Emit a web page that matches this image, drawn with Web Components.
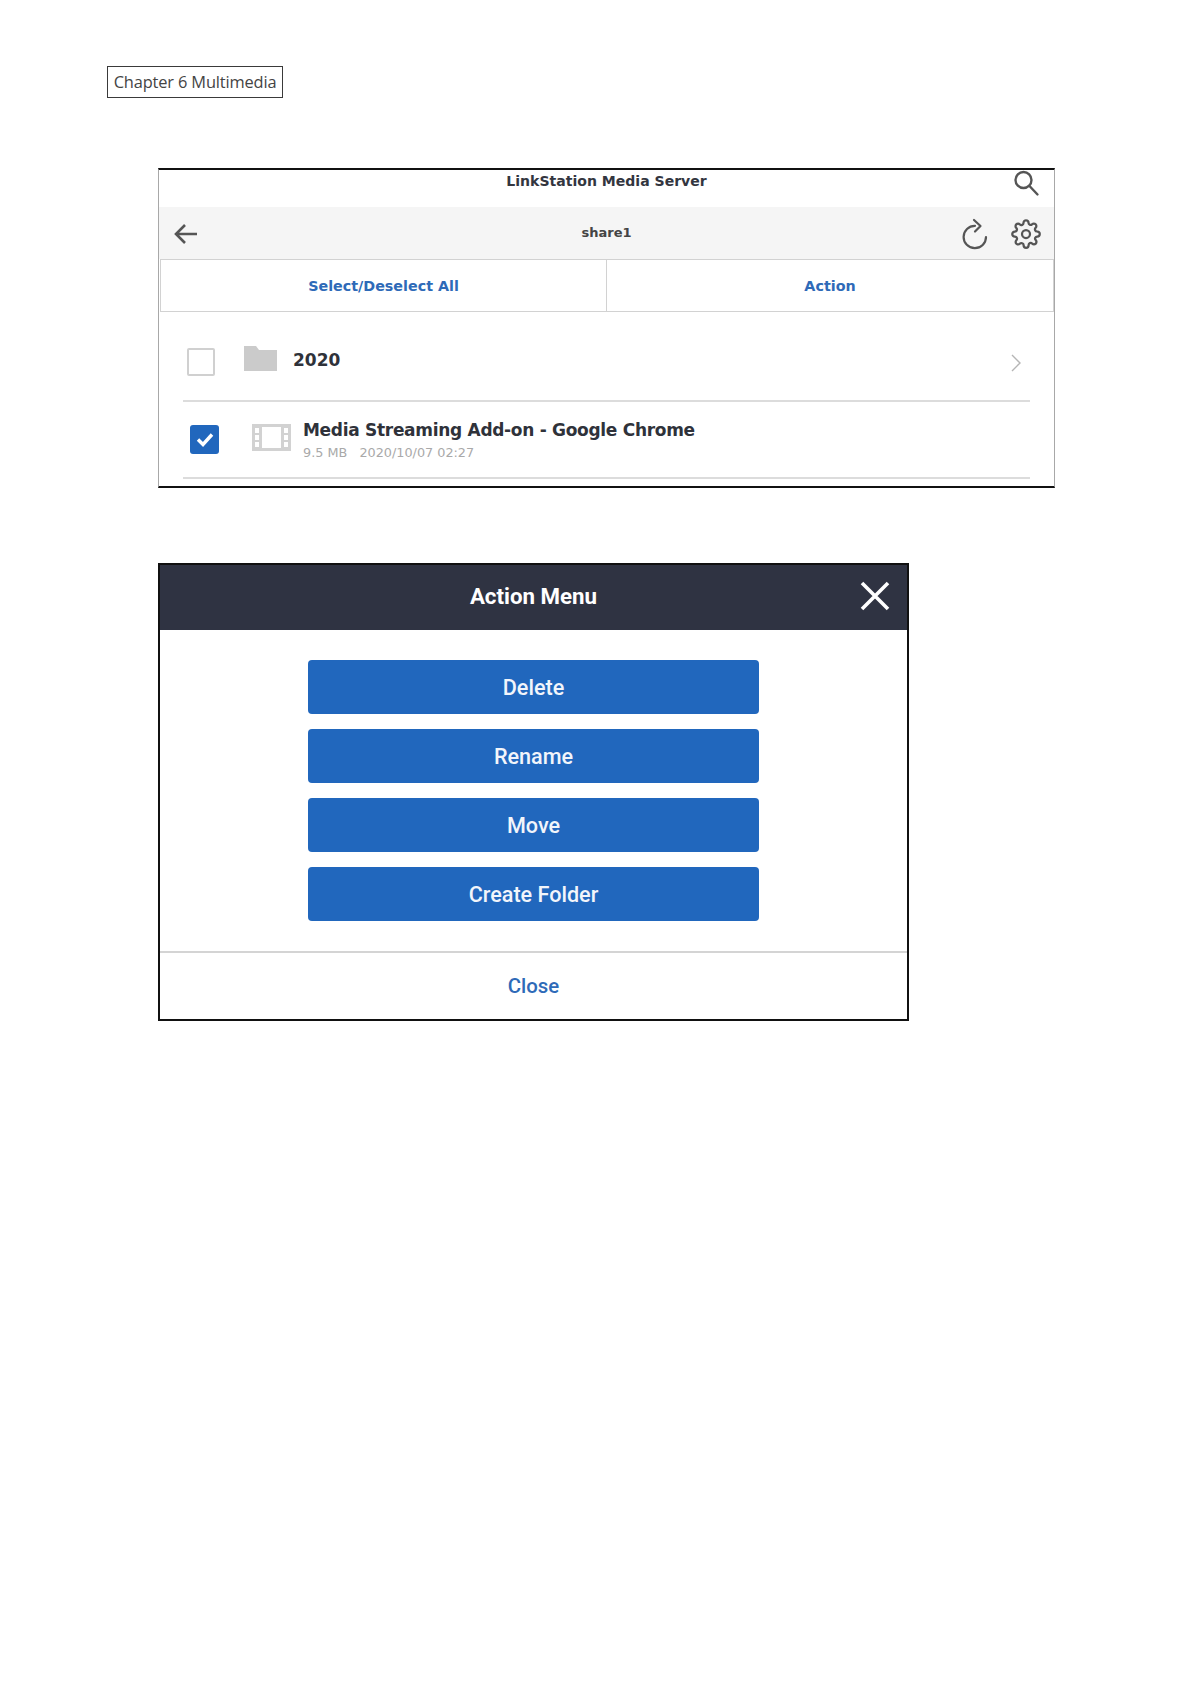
<!DOCTYPE html>
<html>
<head>
<meta charset="utf-8">
<title>Chapter 6 Multimedia</title>
<style>
  html, body { margin: 0; background: #fff; }
  doc-page { font-family: "DejaVu Sans", sans-serif; }
</style>
</head>
<body>
<doc-page>
  <chapter-tag>Chapter 6 Multimedia</chapter-tag>
  <media-panel>
    <file-row kind="folder" name="2020"></file-row>
    <file-row kind="video" checked name="Media Streaming Add-on - Google Chrome" meta="9.5 MB&#160;&#160;&#160;2020/10/07 02:27"></file-row>
  </media-panel>
  <action-menu>
    <menu-button>Delete</menu-button>
    <menu-button>Rename</menu-button>
    <menu-button>Move</menu-button>
    <menu-button>Create Folder</menu-button>
  </action-menu>
</doc-page>

<script>
class docPage extends HTMLElement {
    constructor(){
        super();
        this.attachShadow({ mode : "open"});
        this.shadowRoot.innerHTML = `
        <style>
            :host { display: block; width: 1191px; height: 1684px; box-sizing: border-box; padding: 66px 0 0 107px; background: #fff; }
            ::slotted(media-panel) { margin: 70px 0 0 51px; }
            ::slotted(action-menu) { margin: 75px 0 0 51px; }
        </style>
        <slot></slot>`;
    }
}

class chapterTag extends HTMLElement {
    constructor(){
        super();
        this.attachShadow({ mode : "open"});
        this.shadowRoot.innerHTML = `
        <style>
            :host {
                display: block; width: 176px; height: 32px; box-sizing: border-box;
                border: 1px solid #3a3a3a; text-align: center;
                font: 400 16.4px/29px "Open Sans", sans-serif; letter-spacing: -0.15px; color: #444; white-space: nowrap;
            }
        </style>
        <slot></slot>`;
    }
}

class mediaPanel extends HTMLElement {
    constructor(){
        super();
        this.attachShadow({ mode : "open"});
        this.shadowRoot.innerHTML = `
        <style>
            :host {
                display: block; width: 897px; height: 320px; box-sizing: border-box;
                border: 1px solid #a8a8a8; border-top: 2px solid #111; border-bottom: 2px solid #111;
                font-family: "DejaVu Sans", sans-serif; background: #fff;
            }
            .title { height: 37px; display: flex; justify-content: center; position: relative; font-size: 14.05px; font-weight: 700; color: #33363f; line-height: 23px; }
            .search { position: absolute; right: 14px; top: -1px; }
            .nav { height: 52px; background: #f5f5f5; display: flex; align-items: center; padding: 0 13px 0 13px; gap: 21px; }
            .nav .where { flex: 1; text-align: center; font-size: 13px; font-weight: 700; color: #444; padding-left: 54px; padding-bottom: 1px; }
            .tabs { display: grid; grid-template-columns: 445px 1fr; height: 53px; box-sizing: border-box; border: 1px solid #d2d2d2; margin: 0 0 0 1px; }
            .tabs div { display: flex; align-items: center; justify-content: center; font-size: 14.3px; font-weight: 700; color: #2e6ab8; }
            .tabs div + div { border-left: 1px solid #d2d2d2; }
            .list { display: block; }
        </style>
        <div class="title">
            <span>LinkStation Media Server</span>
            <svg class="search" width="28" height="28" viewBox="0 0 28 28" fill="none" stroke="#555" stroke-width="2.4"><circle cx="11.5" cy="11" r="8"/><path d="M17.5 17l8 8.5" stroke-linecap="round"/></svg>
        </div>
        <div class="nav">
            <svg width="26" height="24" viewBox="0 0 26 24" fill="none" stroke="#555" stroke-width="2.6" style="margin-top:2px;margin-left:1px"><path d="M24 12H3M12 3l-9 9 9 9"/></svg>
            <span class="where">share1</span>
            <svg width="30" height="32" viewBox="0 0 30 32" fill="none" stroke="#555" stroke-width="2.2" stroke-linecap="round" style="margin-top:2px"><path d="M26 19A11.2 11.2 0 1 1 15 7.8"/><path d="M14 2l6.5 6-5.5 5.5" stroke-linejoin="round"/></svg>
            <svg width="30" height="30" viewBox="0 0 24 24" fill="none" stroke="#555" stroke-width="1.8" style="margin-top:2px"><circle cx="12" cy="12" r="3.2"/><path d="M19.4 15a1.65 1.65 0 0 0 .33 1.82l.06.06a2 2 0 0 1 0 2.83 2 2 0 0 1-2.83 0l-.06-.06a1.65 1.65 0 0 0-1.82-.33 1.65 1.65 0 0 0-1 1.51V21a2 2 0 0 1-2 2 2 2 0 0 1-2-2v-.09A1.65 1.65 0 0 0 9 19.4a1.65 1.65 0 0 0-1.82.33l-.06.06a2 2 0 0 1-2.83 0 2 2 0 0 1 0-2.83l.06-.06a1.65 1.65 0 0 0 .33-1.82 1.65 1.65 0 0 0-1.51-1H3a2 2 0 0 1-2-2 2 2 0 0 1 2-2h.09A1.65 1.65 0 0 0 4.6 9a1.65 1.65 0 0 0-.33-1.82l-.06-.06a2 2 0 0 1 0-2.83 2 2 0 0 1 2.83 0l.06.06a1.65 1.65 0 0 0 1.82.33H9a1.65 1.65 0 0 0 1-1.51V3a2 2 0 0 1 2-2 2 2 0 0 1 2 2v.09a1.65 1.65 0 0 0 1 1.51 1.65 1.65 0 0 0 1.82-.33l.06-.06a2 2 0 0 1 2.83 0 2 2 0 0 1 0 2.83l-.06.06a1.65 1.65 0 0 0-.33 1.82V9a1.65 1.65 0 0 0 1.51 1H21a2 2 0 0 1 2 2 2 2 0 0 1-2 2h-.09a1.65 1.65 0 0 0-1.51 1z"/></svg>
        </div>
        <div class="tabs"><div>Select/Deselect All</div><div>Action</div></div>
        <div class="list"><slot></slot></div>`;
    }
}

class fileRow extends HTMLElement {
    constructor(){
        super();
        this.attachShadow({ mode : "open"});
    }
    getIcon(){
        if (this.getAttribute("kind") == "folder") {
            return `<svg class="icon" width="33" height="25" viewBox="0 0 33 25"><path fill="#cbcbcb" d="M0 0h12l3 4h18v21H0z"/></svg>`;
        }
        return `<svg class="icon" width="39" height="27" viewBox="0 0 39 27"><path fill="#d2d2d2" fill-rule="evenodd" d="M0 0h39v27H0zM10 3v21h19V3zM3 4v5h4V4zM3 11v5h4v-5zM3 18v5h4v-5zM32 4v5h4V4zM32 11v5h4v-5zM32 18v5h4v-5z"/></svg>`;
    }
    connectedCallback(){
        const video = this.getAttribute("kind") != "folder";
        const meta = this.getAttribute("meta");
        this.shadowRoot.innerHTML = `
        <style>
            :host { display: block; font-family: "DejaVu Sans", sans-serif; }
            .row { margin: 0 24px 0 24px; border-bottom: 2px solid #dcdcdc; display: flex; align-items: center; box-sizing: border-box; height: ${video ? 77 : 90}px; }
            .box { width: 28px; height: 28px; box-sizing: border-box; border: 2px solid #d0d0d0; border-radius: 2px; margin-left: 4px; flex: none; margin-top: 12px; }
            .box.on { background: #2167bd; border: 0; border-radius: 3px; margin-left: 7px; margin-right: 33px; margin-top: 0; display: flex; align-items: center; justify-content: center; width: 29px; height: 29px; }
            .icon { flex: none; margin: 5px 16px 0 29px; }
            .on + .icon { margin: -4px 12px 0 0; }
            .name { font-weight: 700; font-size: 17px; color: #2f323a; letter-spacing: ${video ? -0.3 : 0}px; }
            .meta { font-size: 12.8px; color: #a9a9a9; margin-top: 5px; }
            .text { flex: 1; margin-top: ${video ? 0 : 8}px; }
            .more { margin-right: 9px; margin-top: 13px; }
        </style>
        <div class="row">
            <div class="box ${this.hasAttribute("checked") ? "on" : ""}">${this.hasAttribute("checked") ? '<svg width="18" height="15" viewBox="0 0 18 15" fill="none" stroke="#fff" stroke-width="3.4"><path d="M2 7.5l5 5 9-10"/></svg>' : ""}</div>
            ${this.getIcon()}
            <div class="text">
                <div class="name">${this.getAttribute("name")}</div>
                ${meta ? `<div class="meta">${meta}</div>` : ""}
            </div>
            ${video ? "" : '<svg class="more" width="10" height="18" viewBox="0 0 10 18" fill="none" stroke="#b5b5b5" stroke-width="1.4"><path d="M1 1l8 8-8 8"/></svg>'}
        </div>`;
    }
}

class actionMenu extends HTMLElement {
    constructor(){
        super();
        this.attachShadow({ mode : "open"});
        this.shadowRoot.innerHTML = `
        <style>
            :host { display: block; width: 751px; height: 458px; box-sizing: border-box; border: 2px solid #111; background: #fff; font-family: Roboto, sans-serif; }
            header { height: 65px; background: #2f3342; color: #fff; display: flex; align-items: center; justify-content: center; position: relative; font: 700 22.3px Roboto, sans-serif; padding-bottom: 4px; box-sizing: border-box; }
            header svg { position: absolute; right: 17px; top: 16px; }
            .buttons { display: flex; flex-direction: column; align-items: center; gap: 15px; padding: 30px 0; border-bottom: 2px solid #d4d4d4; }
            .close { text-align: center; font: 500 20.4px/67px Roboto, sans-serif; color: #2e6ab8; }
        </style>
        <header>Action Menu
            <svg width="30" height="30" viewBox="0 0 30 30" stroke="#fff" stroke-width="3.6" fill="none"><path d="M2 2l26 26M28 2L2 28"/></svg>
        </header>
        <div class="buttons"><slot></slot></div>
        <div class="close">Close</div>`;
    }
}

class menuButton extends HTMLElement {
    constructor(){
        super();
        this.attachShadow({ mode : "open"});
        this.shadowRoot.innerHTML = `
        <style>
            :host { display: flex; align-items: center; justify-content: center; width: 451px; height: 54px; box-sizing: border-box; background: #2167bd; border-radius: 4px; color: #f2f5fb; font: 500 21.6px Roboto, sans-serif; }
        </style>
        <slot></slot>`;
    }
}

customElements.define('doc-page', docPage);
customElements.define('chapter-tag', chapterTag);
customElements.define('media-panel', mediaPanel);
customElements.define('file-row', fileRow);
customElements.define('action-menu', actionMenu);
customElements.define('menu-button', menuButton);
</script>
</body>
</html>
